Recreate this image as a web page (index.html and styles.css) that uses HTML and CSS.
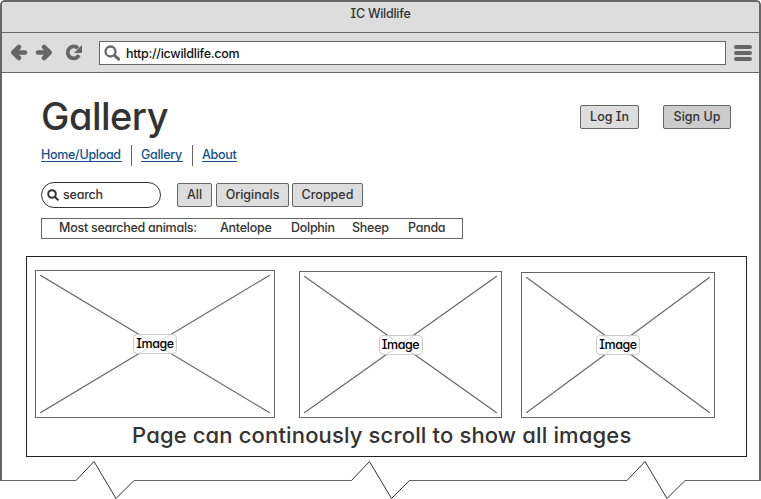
FILE: index.html
```
<!DOCTYPE html>
<html lang="en">
<head>
<meta charset="utf-8">
<title>IC Wildlife</title>
<link rel="stylesheet" href="styles.css">
</head>
<body>
<div class="window">
  <div class="titlebar"><span>IC Wildlife</span></div>
  <div class="toolbar">
    <svg class="controls" width="90" height="39" viewBox="0 0 90 39" fill="none" stroke="#666" stroke-width="4.6" stroke-linecap="round" stroke-linejoin="round">
      <path d="M23 19.5H12M17 14L11.300 19.500L17 25"/>
      <path d="M36 19.5H47M42 14L47.700 19.500L42 25"/>
      <path stroke-linecap="butt" stroke-width="3.8" d="M76 15.300A6 6 0 1 0 77 22.200"/>
      <path fill="#666" stroke="none" d="M80 12V20H72Z"/>
    </svg>
    <div class="address">
      <svg width="18" height="18" viewBox="0 0 18 18" fill="none" stroke="#666"><circle cx="6.500" cy="6.500" r="5" stroke-width="2.300"/><path stroke-width="3" stroke-linecap="round" d="M11 10.800L14.600 14.200"/></svg>
      <span>http://icwildlife.com</span>
    </div>
    <div class="menu"><i></i><i></i><i></i></div>
  </div>
  <main class="page">
    <header class="header">
      <h1>Gallery</h1>
      <button class="button login">Log In</button>
      <button class="button signup">Sign Up</button>
    </header>
    <nav class="nav">
      <a class="home" href="#">Home/Upload</a>
      <a class="gallery" href="#">Gallery</a>
      <a class="about" href="#">About</a>
    </nav>
    <div class="filters">
      <div class="search">
        <svg width="12" height="12" viewBox="0 0 12 12" fill="none" stroke="#333" stroke-width="2"><circle cx="5" cy="5" r="3.8"/><path stroke-linecap="round" d="M8 8L10.8 10.8"/></svg>
        <span>search</span>
      </div>
      <button class="button all">All</button>
      <button class="button originals">Originals</button>
      <button class="button cropped">Cropped</button>
    </div>
    <div class="popular">
      <span class="label">Most searched animals:</span>
      <span class="antelope">Antelope</span>
      <span class="dolphin">Dolphin</span>
      <span class="sheep">Sheep</span>
      <span class="panda">Panda</span>
    </div>
    <section class="panel">
      <div class="images">
        <div class="image large"><svg viewBox="0 0 100 100" preserveAspectRatio="none"><path d="M0 0L100 100M100 0L0 100"/></svg><span>Image</span></div>
        <div class="image medium"><svg viewBox="0 0 100 100" preserveAspectRatio="none"><path d="M0 0L100 100M100 0L0 100"/></svg><span>Image</span></div>
        <div class="image small"><svg viewBox="0 0 100 100" preserveAspectRatio="none"><path d="M0 0L100 100M100 0L0 100"/></svg><span>Image</span></div>
      </div>
      <p class="caption"><span>Page can continously scroll to show all images</span></p>
    </section>
  </main>
</div>
<svg class="tear" width="761" height="39" viewBox="0 0 761 39" fill="none">
  <path stroke="#666" d="M0 20.5H76M134 20.5H351.500M409.500 20.5H627M685 20.5H761"/>
  <path stroke="#333" d="M76 20.5L94 1.500L116 38.500L134 20.500M351.500 20.500L369.500 1.500L391.500 38.500L409.500 20.500M627 20.500L645 1.500L667 38.500L685 20.500"/>
</svg>
</body>
</html>
```

FILE: styles.css
```
* { box-sizing: border-box; }
body {
  margin: 0;
  height: 499px;
  overflow: hidden;
  background: #fff;
  color: #333;
  font: 500 12.5px/16px Inter, "Open Sans", sans-serif;
  font-feature-settings: "cv11", "cv08";
  white-space: nowrap;
}
.window {
  height: 481px;
  border: 2px solid #666;
  border-bottom: 0;
  border-radius: 5px 5px 0 0;
  overflow: hidden;
}
.titlebar {
  height: 31px;
  padding-top: 4px;
  background: #ddd;
  border-bottom: 1px solid #666;
  text-align: center;
  letter-spacing: -0.25px;
}
.toolbar {
  display: flex;
  height: 40px;
  background: #ddd;
  border-bottom: 1px solid #666;
}
.controls { margin-right: 7px; }
.address {
  display: flex;
  gap: 4px;
  width: 627px;
  height: 24px;
  margin-top: 8px;
  padding: 3px 4px;
  background: #fff;
  border: 1px solid #666;
  color: #111;
}
.address span { padding-top: 1px; letter-spacing: -0.25px; }
.menu {
  display: flex;
  flex-direction: column;
  gap: 2px;
  margin: 12px 0 0 8px;
}
.menu i { width: 18px; height: 4px; border-radius: 2px; background: #666; }
.page { padding: 0 12px 0 24px; }
.header {
  display: flex;
  height: 72px;
  padding: 32px 16px 0 15px;
}
h1 {
  flex: 1;
  margin: -13px 0 0;
  font-size: 38px;
  line-height: 48px;
  font-weight: 500;
  letter-spacing: -0.5px;
}
.button {
  height: 24px;
  padding: 0 0 1px;
  border: 1px solid #666;
  border-radius: 2px;
  background: #ddd;
  color: #333;
  font: inherit;
  font-feature-settings: inherit;
  letter-spacing: 0;
}
.login { width: 59px; margin-right: 24px; }
.signup { width: 68px; background: #ccc; }
.nav { display: flex; margin-left: 15px; height: 21px; }
.nav a {
  height: 17px;
  margin-right: 9px;
  padding-top: 2px;
  border-bottom: 1px solid #154f8f;
  color: #154f8f;
  text-decoration: none;
  letter-spacing: -0.3px;
}
.nav a + a { position: relative; margin-left: 10px; }
.nav a + a::before {
  content: "";
  position: absolute;
  left: -10px;
  top: 0;
  height: 21px;
  border-left: 1px solid #666;
}
.home { width: 81px; }
.gallery { width: 42px; }
.about { width: 35px; }
.filters { display: flex; align-items: center; margin: 16px 0 0 15px; height: 26px; }
.search {
  display: flex;
  align-items: center;
  gap: 4px;
  width: 120px;
  height: 26px;
  margin-right: 16px;
  padding: 0 5px 1px;
  border: 1px solid #333;
  border-radius: 13px;
  letter-spacing: -0.2px;
}
.all { width: 35px; margin-right: 4px; }
.originals { width: 73px; margin-right: 3px; }
.cropped { width: 71px; }
.popular {
  display: flex;
  width: 422px;
  height: 21px;
  margin: 10px 0 0 15px;
  padding: 1px 0 0 17px;
  border: 1px solid #666;
  letter-spacing: -0.27px;
}
.label { width: 161px; }
.antelope { width: 71px; }
.dolphin { width: 61px; }
.sheep { width: 56px; }
.panel {
  height: 201px;
  margin-top: 17px;
  padding: 13px 8px 0;
  border: 1px solid #222;
}
.images { display: flex; align-items: flex-end; height: 148px; }
.image {
  display: flex;
  align-items: center;
  justify-content: center;
  position: relative;
  padding: 4px;
  border: 1px solid #666;
}
.image svg { width: 100%; height: 100%; }
.image path { stroke: #666; stroke-width: 1.2px; vector-effect: non-scaling-stroke; }
.image span {
  position: absolute;
  width: 44px;
  height: 20px;
  border: 1px solid #ccc;
  border-radius: 4px;
  background: rgba(255, 255, 255, 0.8);
  color: #000;
  line-height: 17px;
  text-align: center;
  letter-spacing: -0.4px;
}
.large { width: 240px; height: 148px; margin-right: 24px; }
.medium { width: 203px; height: 147px; margin-right: 19px; }
.small { width: 194px; height: 146px; }
.caption {
  margin: 2px 0 0 97px;
  font-size: 22px;
  line-height: 30px;
  letter-spacing: 0.15px;
}
.tear { position: absolute; left: 0; top: 460px; }
```
